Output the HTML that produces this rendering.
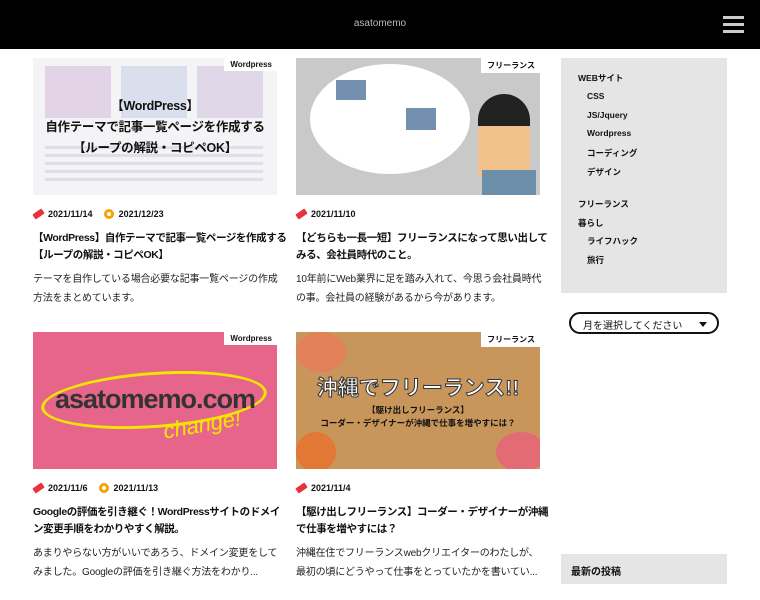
<!DOCTYPE html>
<html><head><meta charset="utf-8"><style>
*{margin:0;padding:0;box-sizing:border-box}
body{width:760px;height:600px;overflow:hidden;background:#fff;font-family:"Liberation Sans","Noto Sans CJK JP",sans-serif;color:#111;position:relative}
.hd{position:absolute;left:0;top:0;width:760px;height:49px;background:#000}
.logo{position:absolute;left:0;width:760px;top:18px;text-align:center;color:#bbb;font-size:10px}
.hb{position:absolute;left:723px;width:21px;height:3px;background:#ccc}
.card{position:absolute;width:244px}
.img{position:absolute;left:0;top:0;width:244px;height:137px;overflow:hidden}
.tag{position:absolute;right:0;top:0;background:#fff;font-size:8px;font-weight:bold;padding:2px 5px 2px 6px}
.meta{position:absolute;left:0;top:151px;font-size:9px;font-weight:bold;white-space:nowrap;display:flex;align-items:center}
.pen{display:inline-block;width:11px;height:6px;background:#e8323c;transform:rotate(-35deg);border-radius:1px;margin-right:4px}
.upd{display:inline-block;width:10px;height:10px;border:3px solid #f5a300;border-radius:50%;margin:0 5px 0 11px}
.tt{position:absolute;left:0;top:172px;white-space:nowrap;font-size:10.5px;font-weight:bold;line-height:17px;letter-spacing:-.4px}
.ex{position:absolute;left:0;top:212px;white-space:nowrap;font-size:10px;line-height:19px;color:#222;letter-spacing:-.2px}
.side{position:absolute;left:561px;top:58px;width:166px;height:235px;background:#e5e5e5;font-size:8.5px;font-weight:bold}
.side div{position:absolute;white-space:nowrap}
.sel{position:absolute;left:569px;top:312px;width:150px;height:22px;border:2px solid #111;border-radius:11px;font-size:10px;padding:3px 0 0 12px}
.sel:after{content:"";position:absolute;right:10px;top:8px;border:4px solid transparent;border-top:5px solid #111}
.new{position:absolute;left:561px;top:554px;width:166px;height:30px;background:#e5e5e5;font-size:10px;font-weight:bold;padding:9px 0 0 10px}
</style></head><body>
<div class="hd"><div class="logo">asatomemo</div>
<div class="hb" style="top:16px"></div><div class="hb" style="top:23px"></div><div class="hb" style="top:30px"></div></div>

<div class="card" style="left:33px;top:58px">
 <div class="img" style="background:#f4f4f6">
  <div style="position:absolute;left:12px;top:8px;width:66px;height:52px;background:#e3d3e6"></div>
  <div style="position:absolute;left:88px;top:8px;width:66px;height:52px;background:#d9dfec"></div>
  <div style="position:absolute;left:164px;top:8px;width:66px;height:52px;background:#e0d7e8"></div>
  <div style="position:absolute;left:12px;top:88px;width:218px;height:40px;background:repeating-linear-gradient(#dde0e8 0 3px,#f4f4f6 3px 8px)"></div>
  <div style="position:absolute;left:0;top:38px;width:244px;text-align:center;font-size:12.5px;font-weight:bold;line-height:21px;color:#111;letter-spacing:-.3px">【WordPress】<br>自作テーマで記事一覧ページを作成する<br>【ループの解説・コピペOK】</div>
  <div class="tag">Wordpress</div></div>
 <div class="meta"><span class="pen"></span>2021/11/14<span class="upd"></span>2021/12/23</div>
 <div class="tt">【WordPress】自作テーマで記事一覧ページを作成する<br>【ループの解説・コピペOK】</div>
 <div class="ex">テーマを自作している場合必要な記事一覧ページの作成<br>方法をまとめています。</div>
</div>

<div class="card" style="left:296px;top:58px">
 <div class="img" style="background:#c9c9c9">
  <div style="position:absolute;left:14px;top:6px;width:160px;height:110px;background:#fff;border-radius:50%"></div>
  <div style="position:absolute;left:182px;top:50px;width:52px;height:70px;background:#f0c18a;border-radius:26px 26px 4px 4px"></div>
  <div style="position:absolute;left:182px;top:36px;width:52px;height:32px;background:#222;border-radius:26px 26px 0 0"></div>
  <div style="position:absolute;left:186px;top:112px;width:54px;height:25px;background:#6b8fa8"></div>
  <div style="position:absolute;left:40px;top:22px;width:30px;height:20px;background:#7390b0"></div>
  <div style="position:absolute;left:110px;top:50px;width:30px;height:22px;background:#7390b0"></div>
  <div class="tag">フリーランス</div></div>
 <div class="meta"><span class="pen"></span>2021/11/10</div>
 <div class="tt">【どちらも一長一短】フリーランスになって思い出して<br>みる、会社員時代のこと。</div>
 <div class="ex">10年前にWeb業界に足を踏み入れて、今思う会社員時代<br>の事。会社員の経験があるから今があります。</div>
</div>

<div class="card" style="left:33px;top:332px">
 <div class="img" style="background:#e7658a">
  <div style="position:absolute;left:8px;top:40px;width:226px;height:56px;border:3px solid #f3e600;border-radius:50%;transform:rotate(-4deg)"></div>
  <div style="position:absolute;left:0;top:52px;width:244px;text-align:center;font-size:27px;font-weight:bold;color:#333;letter-spacing:-1px">asatomemo.com</div>
  <div style="position:absolute;left:130px;top:80px;font-size:22px;font-style:italic;color:#f3e600;transform:rotate(-10deg)">change!</div>
  <div class="tag">Wordpress</div></div>
 <div class="meta"><span class="pen"></span>2021/11/6<span class="upd"></span>2021/11/13</div>
 <div class="tt">Googleの評価を引き継ぐ！WordPressサイトのドメイ<br>ン変更手順をわかりやすく解説。</div>
 <div class="ex">あまりやらない方がいいであろう、ドメイン変更をして<br>みました。Googleの評価を引き継ぐ方法をわかり...</div>
</div>

<div class="card" style="left:296px;top:332px">
 <div class="img" style="background:#c8955a">
  <div style="position:absolute;left:0;top:0;width:50px;height:40px;background:#e87a5a;border-radius:50%;opacity:.8"></div>
  <div style="position:absolute;left:200px;top:100px;width:50px;height:40px;background:#e8607a;border-radius:50%;opacity:.8"></div>
  <div style="position:absolute;left:0;top:100px;width:40px;height:40px;background:#e8702a;border-radius:50%;opacity:.8"></div>
  <div style="position:absolute;left:0;top:40px;width:244px;text-align:center;font-size:21px;font-weight:bold;color:#fff;-webkit-text-stroke:1px #333">沖縄でフリーランス!!</div>
  <div style="position:absolute;left:0;top:72px;width:244px;text-align:center;font-size:8.5px;font-weight:bold;line-height:13px">【駆け出しフリーランス】<br>コーダー・デザイナーが沖縄で仕事を増やすには？</div>
  <div class="tag">フリーランス</div></div>
 <div class="meta"><span class="pen"></span>2021/11/4</div>
 <div class="tt">【駆け出しフリーランス】コーダー・デザイナーが沖縄<br>で仕事を増やすには？</div>
 <div class="ex">沖縄在住でフリーランスwebクリエイターのわたしが、<br>最初の頃にどうやって仕事をとっていたかを書いてい...</div>
</div>

<div class="side">
 <div style="left:17px;top:14px">WEBサイト</div>
 <div style="left:26px;top:33px">CSS</div>
 <div style="left:26px;top:52px">JS/Jquery</div>
 <div style="left:26px;top:70px">Wordpress</div>
 <div style="left:26px;top:89px">コーディング</div>
 <div style="left:26px;top:108px">デザイン</div>
 <div style="left:17px;top:140px">フリーランス</div>
 <div style="left:17px;top:159px">暮らし</div>
 <div style="left:26px;top:177px">ライフハック</div>
 <div style="left:26px;top:196px">旅行</div>
</div>
<div class="sel">月を選択してください</div>
<div class="new">最新の投稿</div>
</body></html>
